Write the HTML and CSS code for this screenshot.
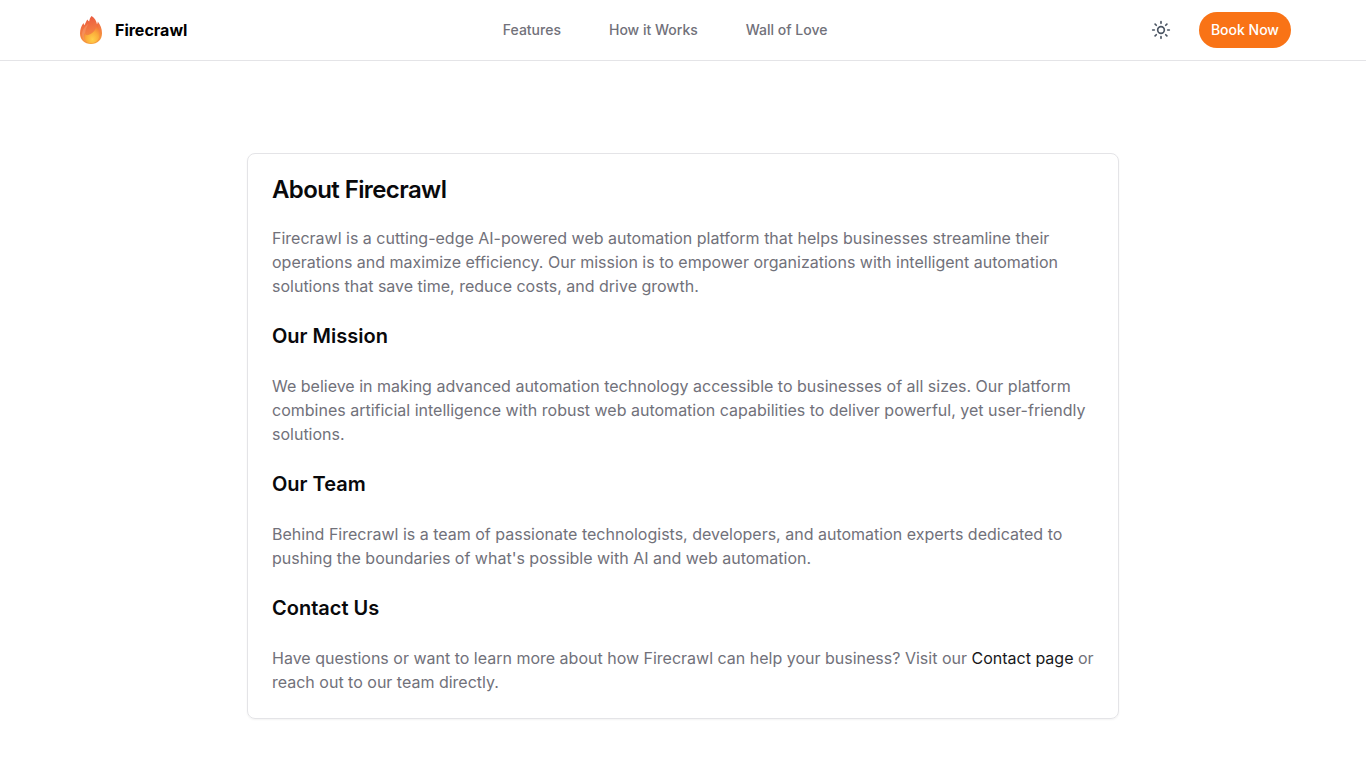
FILE: index.html
```html
<!DOCTYPE html>
<html lang="en">
<head>
<meta charset="utf-8">
<meta name="viewport" content="width=device-width, initial-scale=1">
<title>About Firecrawl</title>
<link rel="stylesheet" href="styles.css">
</head>
<body>
<header class="site-header">
  <div class="header-inner">
    <a class="brand" href="#">
      <svg class="brand-flame" viewBox="0 0 24 30" aria-hidden="true">
        <defs>
          <linearGradient id="outer" x1="0.4" y1="0" x2="0.6" y2="1">
            <stop offset="0" stop-color="#ea5a40"/>
            <stop offset="0.5" stop-color="#f37a42"/>
            <stop offset="1" stop-color="#f6a03a"/>
          </linearGradient>
          <radialGradient id="inner" cx="0.55" cy="0.8" r="0.8">
            <stop offset="0" stop-color="#ffd04a"/>
            <stop offset="0.5" stop-color="#fbab3a"/>
            <stop offset="1" stop-color="#f2693a"/>
          </radialGradient>
        </defs>
        <path fill="url(#outer)" d="M12.600 1c3.400 2.400 4.800 5 5.400 8.200.5-.8.800-1.700.8-2.700 2.700 3.500 4.200 7.300 4.200 11.700 0 6.500-4.400 10.800-11 10.800S1 24.800 1 18.600c0-4.500 1.500-8.300 3.600-10.700.1 1 .3 1.700.8 2.400C6.800 8 7.200 5.900 8.600 4.600c.4 1 .8 1.500 1.500 2C10.600 4.600 11 2.500 12.600 1Z"/>
        <path fill="#f79a68" opacity=".6" d="M9.800 8.500C4.500 12.500 2.500 16.500 3.200 21c.4 2.600 1.600 4.500 3.400 5.800C5.500 20.500 5.800 14 9.800 8.500Z"/>
        <path fill="url(#inner)" d="M18 9.500c4 7 4.200 18.300-5.500 18.700-6.500.2-9-5.500-7-10.300.7 1.300 1.500 2.200 2.700 2.400C13 19 17 15.500 18 9.500Z"/>
      </svg>
      <span>Firecrawl</span>
    </a>
    <nav class="main-nav" aria-label="Main">
      <a href="#features">Features</a>
      <a href="#how">How it Works</a>
      <a href="#love">Wall of Love</a>
    </nav>
    <div class="actions">
      <button class="theme-toggle" type="button" aria-label="Toggle theme">
        <svg viewBox="0 0 24 24" aria-hidden="true">
          <circle cx="12" cy="12" r="4"/>
          <path d="M12 2v2M12 20v2M4.930 4.930l1.410 1.410M17.660 17.660l1.410 1.410M2 12h2M20 12h2M6.340 17.660l-1.410 1.410M19.070 4.930l-1.410 1.410"/>
        </svg>
      </button>
      <a class="book" href="#book">Book Now</a>
    </div>
  </div>
</header>
<main class="page">
  <article class="card">
    <h1>About Firecrawl</h1>
    <p>Firecrawl is a cutting-edge AI-powered web automation platform that helps businesses streamline their operations and maximize efficiency. Our mission is to empower organizations with intelligent automation solutions that save time, reduce costs, and drive growth.</p>
    <h2>Our Mission</h2>
    <p>We believe in making advanced automation technology accessible to businesses of all sizes. Our platform combines artificial intelligence with robust web automation capabilities to deliver powerful, yet user-friendly solutions.</p>
    <h2>Our Team</h2>
    <p>Behind Firecrawl is a team of passionate technologists, developers, and automation experts dedicated to pushing the boundaries of what's possible with AI and web automation.</p>
    <h2>Contact Us</h2>
    <p>Have questions or want to learn more about how Firecrawl can help your business? Visit our <a href="#contact">Contact page</a> or reach out to our team directly.</p>
  </article>
</main>
</body>
</html>
```
FILE: styles.css
```css
*,
*::before,
*::after {
  box-sizing: border-box;
}

body {
  margin: 0;
  background: #fff;
  color: #09090b;
  font-family: Inter, "Liberation Sans", sans-serif;
  font-size: 16px;
  line-height: 24px;
}

a {
  color: inherit;
  text-decoration: none;
}

.site-header {
  border-bottom: 1px solid #e4e4e7;
}

.header-inner {
  display: flex;
  justify-content: space-between;
  align-items: center;
  max-width: 1216px;
  margin: 0 auto;
  padding: 12px 0 12px 4px;
}

.brand {
  display: flex;
  align-items: center;
  gap: 12px;
  color: #000;
  font-weight: 700;
}

.brand-flame {
  width: 24px;
  height: 30px;
}

.main-nav {
  display: flex;
  gap: 48px;
  color: #71717a;
  font-size: 14px;
  font-weight: 500;
}

.actions {
  display: flex;
  align-items: center;
  gap: 20px;
}

.theme-toggle {
  display: grid;
  place-items: center;
  width: 36px;
  height: 36px;
  padding: 0;
  border: 0;
  background: none;
  color: #4b5563;
}

.theme-toggle svg {
  width: 20px;
  height: 20px;
  fill: none;
  stroke: currentColor;
  stroke-width: 2;
  stroke-linecap: round;
}

.book {
  padding: 6px 12px;
  border-radius: 18px;
  background: #f97316;
  color: #fff;
  font-size: 14px;
  font-weight: 500;
}

.page {
  max-width: 872px;
  margin: 0 auto;
  padding: 92px 0 48px;
}

.card {
  display: grid;
  gap: 24px;
  padding: 24px;
  border: 1px solid #e4e4e7;
  border-radius: 8px;
  box-shadow: 0 1px 2px rgba(0, 0, 0, 0.05);
}

h1,
h2,
p {
  margin: 0;
}

h1 {
  font-size: 24px;
  line-height: 24px;
  font-weight: 600;
  letter-spacing: -0.025em;
}

h2 {
  font-size: 20px;
  line-height: 28px;
  font-weight: 600;
}

p {
  color: #71717a;
}

p a {
  color: #18181b;
}
```
